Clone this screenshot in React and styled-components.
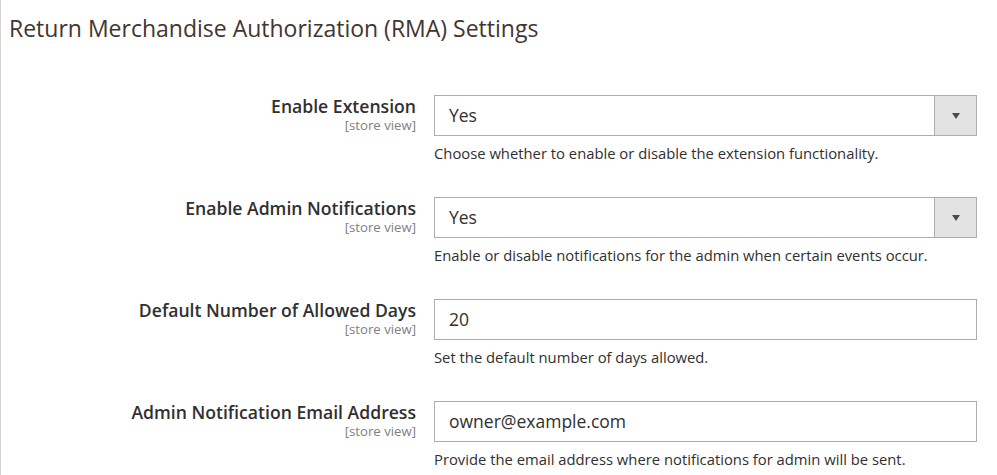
import React from "react";
import styled, { createGlobalStyle } from "styled-components";

const GlobalStyle = createGlobalStyle`
  html, body { margin: 0; padding: 0; background: #ffffff; }
  body { font-family: "Open Sans", "Noto Sans", sans-serif; color: #303030; }
  * { box-sizing: border-box; }
`;

const Section = styled.section`
  width: 997px;
  border-left: 1px solid #d4d4d4;
  border-bottom: 1px solid #e3e3e3;
  padding: 13px 0 6px 0;
`;

const Title = styled.h2`
  margin: 0 0 52px 0;
  padding-left: 8px;
  font-size: 23px;
  line-height: 30px;
  font-weight: 400;
  color: #41362f;
`;

const Fields = styled.div`
  display: flex;
  flex-direction: column;
  gap: 34px;
`;

const Row = styled.div`
  display: grid;
  grid-template-columns: 415px 1fr;
  column-gap: 18px;
  padding-right: 20px;
`;

const LabelCell = styled.div`
  padding-top: 1px;
  text-align: right;
  display: flex;
  flex-direction: column;
  align-items: flex-end;
`;

const Label = styled.label`
  font-size: 17.6px;
  line-height: 21px;
  font-weight: 600;
  color: #303030;
`;

const Scope = styled.span`
  margin-top: 1px;
  font-size: 13.2px;
  line-height: 15px;
  color: #808080;
`;

const FieldCell = styled.div`
  display: flex;
  flex-direction: column;
`;

const SelectBox = styled.div`
  display: flex;
  height: 41px;
  border: 1px solid #adadad;
  background: #ffffff;
`;

const SelectValue = styled.span`
  flex: 1;
  padding-left: 14px;
  font-size: 17.5px;
  line-height: 38px;
  color: #303030;
`;

const SelectButton = styled.span`
  width: 42px;
  border-left: 1px solid #adadad;
  background: #e3e3e3;
  display: flex;
  align-items: center;
  justify-content: center;
`;

const Arrow = styled.span`
  width: 0;
  height: 0;
  border-left: 4.5px solid transparent;
  border-right: 4.5px solid transparent;
  border-top: 6px solid #514943;
  margin-left: 1px;
`;

const TextInput = styled.input`
  display: block;
  width: 100%;
  height: 41px;
  margin: 0;
  border: 1px solid #adadad;
  border-radius: 0;
  padding: 0 14px 2px 14px;
  font-family: "Open Sans", "Noto Sans", sans-serif;
  font-size: 17.5px;
  color: #303030;
  background: #ffffff;
  outline: none;
`;

const Note = styled.p`
  margin: 7px 0 0 0;
  font-size: 14.8px;
  line-height: 20px;
  color: #303030;
`;

const fields = [
  {
    label: "Enable Extension",
    type: "select",
    value: "Yes",
    note: "Choose whether to enable or disable the extension functionality.",
  },
  {
    label: "Enable Admin Notifications",
    type: "select",
    value: "Yes",
    note: "Enable or disable notifications for the admin when certain events occur.",
  },
  {
    label: "Default Number of Allowed Days",
    type: "text",
    value: "20",
    note: "Set the default number of days allowed.",
  },
  {
    label: "Admin Notification Email Address",
    type: "text",
    value: "owner@example.com",
    note: "Provide the email address where notifications for admin will be sent.",
  },
];

export default function App() {
  return (
    <>
      <GlobalStyle />
      <Section>
        <Title>Return Merchandise Authorization (RMA) Settings</Title>
        <Fields>
          {fields.map((f) => (
            <Row key={f.label}>
              <LabelCell>
                <Label>{f.label}</Label>
                <Scope>[store view]</Scope>
              </LabelCell>
              <FieldCell>
                {f.type === "select" ? (
                  <SelectBox>
                    <SelectValue>{f.value}</SelectValue>
                    <SelectButton>
                      <Arrow />
                    </SelectButton>
                  </SelectBox>
                ) : (
                  <TextInput type="text" readOnly value={f.value} />
                )}
                <Note>{f.note}</Note>
              </FieldCell>
            </Row>
          ))}
        </Fields>
      </Section>
    </>
  );
}
